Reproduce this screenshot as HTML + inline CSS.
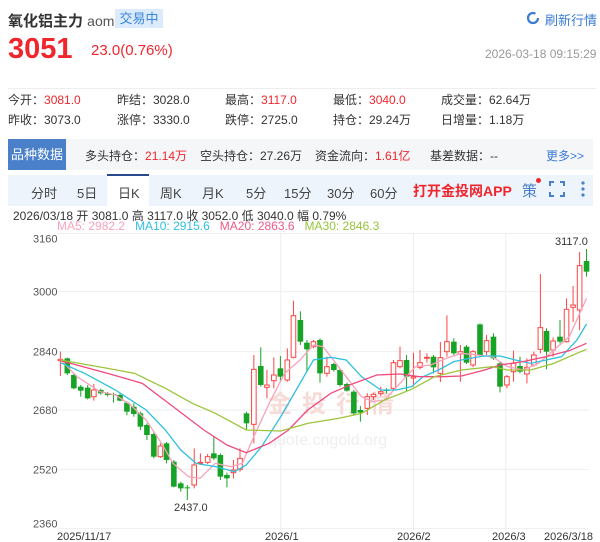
<!DOCTYPE html>
<html><head><meta charset="utf-8"><style>
*{margin:0;padding:0;box-sizing:border-box}
body{width:600px;height:542px;overflow:hidden;background:#fff;font-family:"Liberation Sans","Noto Sans CJK SC",sans-serif;color:#333;position:relative}
.a{position:absolute;white-space:nowrap}
.r{color:#f0262d}
.g{color:#555}
</style></head><body>
<div class="a" style="left:8px;top:10px;font-size:15px;font-weight:bold;color:#333">氧化铝主力 <span style="font-weight:normal;color:#555;font-size:14px">aom</span></div>
<div class="a" style="left:115px;top:9px;width:48px;height:19px;background:#dcebfb;color:#3a86d8;font-size:13px;text-align:center;line-height:19px">交易中</div>
<svg class="a" style="left:526px;top:11px" width="14" height="14" viewBox="0 0 14 14"><circle cx="7" cy="7" r="5" fill="none" stroke="#3a7bd5" stroke-width="2.2" stroke-dasharray="26 6"/></svg>
<div class="a" style="left:545px;top:10px;font-size:13px;color:#3a7bd5">刷新行情</div>
<div class="a r" style="left:8px;top:33px;font-size:29px;font-weight:bold">3051</div>
<div class="a r" style="left:91px;top:42px;font-size:15px">23.0(0.76%)</div>
<div class="a" style="left:485px;top:47px;font-size:12px;color:#999">2026-03-18 09:15:29</div>
<div class="a" style="left:8px;top:88px;width:588px;height:1px;background:#eee"></div>
<div class="a" style="left:8px;top:90px;font-size:12px;line-height:20px">今开：<span class="r">3081.0</span><br>昨收：3073.0</div>
<div class="a" style="left:117px;top:90px;font-size:12px;line-height:20px">昨结：3028.0<br>涨停：3330.0</div>
<div class="a" style="left:225px;top:90px;font-size:12px;line-height:20px">最高：<span class="r">3117.0</span><br>跌停：2725.0</div>
<div class="a" style="left:333px;top:90px;font-size:12px;line-height:20px">最低：<span class="r">3040.0</span><br>持仓：29.24万</div>
<div class="a" style="left:441px;top:90px;font-size:12px;line-height:20px">成交量：62.64万<br>日增量：1.18万</div>
<div class="a" style="left:8px;top:139px;width:585px;height:31px;background:#f5f6f8"></div>
<div class="a" style="left:8px;top:139px;width:58px;height:31px;background:#4a80c9;color:#fff;font-size:13px;line-height:31px;text-align:center">品种数据</div>
<div class="a" style="left:85px;top:147px;font-size:12px">多头持仓：<span class="r">21.14万</span></div>
<div class="a" style="left:200px;top:147px;font-size:12px">空头持仓：27.26万</div>
<div class="a" style="left:315px;top:147px;font-size:12px">资金流向：<span class="r">1.61亿</span></div>
<div class="a" style="left:430px;top:147px;font-size:12px">基差数据：--</div>
<div class="a" style="left:546px;top:147px;font-size:12px;color:#3a7bd5">更多&gt;&gt;</div>
<div class="a" style="left:8px;top:175px;width:585px;height:31px;background:#eef4fc"></div>
<div class="a" style="left:107px;top:174px;width:42px;height:32px;background:#fff;border-top:2px solid #274a8a"></div>
<div class="a" style="top:183px;left:0;font-size:13px;color:#444">
<span class="a" style="left:31px">分时</span><span class="a" style="left:77px">5日</span><span class="a" style="left:118px">日K</span><span class="a" style="left:160px">周K</span><span class="a" style="left:202px">月K</span><span class="a" style="left:246px">5分</span><span class="a" style="left:284px">15分</span><span class="a" style="left:327px">30分</span><span class="a" style="left:370px">60分</span></div>
<div class="a r" style="left:413px;top:181px;font-size:14px;font-weight:bold">打开金投网APP</div>
<div class="a" style="left:522px;top:180px;font-size:15px;color:#4a80c9">策</div>
<div class="a" style="left:536px;top:178px;width:5px;height:5px;border-radius:50%;background:#f0262d"></div>
<svg class="a" style="left:549px;top:181px" width="16" height="16"><path d="M1 5V1h4M11 1h4v4M15 11v4h-4M5 15H1v-4" fill="none" stroke="#4a80c9" stroke-width="2"/></svg>
<svg class="a" style="left:580px;top:180px" width="6" height="18"><circle cx="3" cy="3" r="1.6" fill="#4a80c9"/><circle cx="3" cy="9" r="1.6" fill="#4a80c9"/><circle cx="3" cy="15" r="1.6" fill="#4a80c9"/></svg>
<div class="a" style="left:13px;top:207px;font-size:12px;color:#333">2026/03/18 开 3081.0 高 3117.0 收 3052.0 低 3040.0 幅 0.79%</div>
<div class="a" style="left:57px;top:219px;font-size:12px"><span style="color:#f7a3bb">MA5: 2982.2</span>&nbsp;&nbsp; <span style="color:#2fc0df">MA10: 2915.6</span>&nbsp;&nbsp; <span style="color:#ef5a87">MA20: 2863.6</span>&nbsp;&nbsp; <span style="color:#96c53b">MA30: 2846.3</span></div>
<svg id="ch" class="a" style="left:0;top:0" width="600" height="542"></svg>
<script>
var s='';
var X=function(z){return z/2.6},Y=function(z){return 230+z/3};
[10,185,365,540,718,895].forEach(function(z){s+='<line x1="57" x2="589" y1="'+Y(z)+'" y2="'+Y(z)+'" stroke="#eee"/>'});
[730,1075,1315].forEach(function(z){s+='<line x1="'+X(z)+'" x2="'+X(z)+'" y1="233" y2="530" stroke="#eee"/>'});
var yl=[['3160',25],['3000',185],['2840',365],['2680',540],['2520',718],['2360',880]];
yl.forEach(function(a){s+='<text x="33" y="'+(Y(a[1])+4)+'" font-size="11" fill="#555">'+a[0]+'</text>'});
s+='<text x="268" y="412" font-size="24" fill="#f6dcd9" font-weight="bold" letter-spacing="10">金投行情</text>';
s+='<text x="268" y="445" font-size="16" fill="#eee">quote.cngold.org</text>';
var c=[[157,'r',388,392,365,438],[175,'g',385,430,383,435],[192,'g',435,475,430,478],[210,'g',470,482,465,500],[228,'g',473,505,465,508],[244,'r',480,500,462,512],[262,'g',480,490,476,494],[280,'g',490,495,486,500],[295,'g',492,495,488,518],[312,'g',495,512,488,514],[330,'g',518,545,514,556],[348,'g',530,552,520,560],[365,'g',550,590,545,600],[382,'g',585,615,580,630],[400,'g',612,680,608,685],[417,'r',648,680,640,684],[433,'g',640,690,636,700],[452,'g',695,770,690,772],[470,'g',760,775,755,785],[487,'g',772,775,765,810],[505,'r',705,765,655,775],[521,'r',697,700,670,705],[540,'r',680,697,672,702],[556,'g',670,685,620,690],[573,'g',675,740,670,750],[590,'g',735,745,728,772],[607,'r',720,728,690,745],[624,'r',685,718,655,725],[641,'g',550,580,545,598],[660,'r',418,583,375,640],[678,'g',408,465,352,470],[694,'r',465,472,420,505],[712,'r',435,452,382,475],[729,'g',415,440,378,455],[747,'r',390,450,355,455],[763,'r',257,382,212,385],[781,'g',270,335,244,345],[798,'g',338,358,330,425],[815,'r',335,350,330,355],[832,'g',330,430,325,458],[850,'r',410,430,380,440],[868,'g',402,420,398,425],[884,'g',420,465,415,470],[902,'g',462,482,458,485],[920,'g',485,550,480,556],[937,'g',540,548,528,575],[955,'r',500,535,490,555],[971,'r',493,500,488,510],[990,'r',485,490,470,498],[1005,'g',480,483,475,490],[1023,'r',398,475,390,480],[1040,'r',392,410,350,415],[1057,'g',390,440,375,485],[1075,'r',440,444,368,470],[1092,'r',398,412,360,418],[1110,'r',382,385,370,398],[1127,'g',380,412,375,430],[1145,'r',383,430,336,456],[1162,'r',335,365,256,380],[1180,'g',335,370,325,375],[1197,'r',365,372,345,455],[1213,'g',350,398,345,402],[1230,'r',365,405,360,412],[1248,'g',283,375,280,380],[1265,'r',332,365,315,375],[1283,'g',320,385,310,390],[1300,'g',400,470,395,487],[1318,'r',440,465,435,475],[1335,'r',400,425,362,455],[1352,'g',408,425,380,430],[1370,'r',412,432,385,460],[1388,'r',375,405,365,410],[1405,'r',293,358,132,370],[1421,'g',303,365,295,418],[1438,'r',333,360,322,380],[1456,'g',320,335,270,340],[1473,'r',238,335,205,338],[1490,'r',225,232,168,276],[1507,'r',107,240,66,300],[1525,'g',93,125,57,140]];
c.forEach(function(k){var x=X(k[0]),col=k[1]=='r'?'#f44':'#17a325';
s+='<line x1="'+x+'" x2="'+x+'" y1="'+Y(k[4])+'" y2="'+Y(k[5])+'" stroke="'+col+'"/>';
var h=Math.max(1,Y(k[3])-Y(k[2]));
s+=k[1]=='r'?'<rect x="'+(x-2.3)+'" y="'+Y(k[2])+'" width="4.6" height="'+h+'" fill="#fff" stroke="#f44"/>':'<rect x="'+(x-2.8)+'" y="'+Y(k[2])+'" width="5.6" height="'+h+'" fill="#17a325"/>';});
function pl(p,col){var a=[];for(var i=0;i<p.length;i+=2)a.push(X(p[i])+','+Y(p[i+1]));s+='<polyline points="'+a.join(' ')+'" fill="none" stroke="'+col+'" stroke-width="1.3"/>';}
pl([157,388,200,440,260,485,300,495,340,525,380,570,420,640,450,700,490,740,520,745,560,700,600,710,630,700,660,620,700,520,740,430,780,390,815,345,840,350,860,380,900,440,940,500,970,515,1000,510,1040,460,1080,410,1120,405,1160,385,1200,370,1240,375,1280,380,1320,410,1360,420,1400,400,1440,360,1480,320,1525,205],'#f7a3bb');
pl([157,398,220,430,300,480,380,540,430,600,470,660,510,700,560,710,610,725,640,705,680,650,730,560,770,480,815,390,860,382,900,390,940,440,990,480,1030,480,1070,470,1100,440,1140,420,1180,395,1220,385,1260,378,1300,378,1340,390,1380,400,1420,390,1460,380,1500,330,1525,282],'#2fc0df');
pl([157,392,280,430,370,460,450,530,530,600,590,645,640,668,700,640,750,600,800,540,860,490,920,460,980,435,1040,432,1090,440,1150,440,1200,438,1260,420,1300,405,1360,395,1420,380,1480,362,1525,340],'#ef4a7e');
pl([157,390,280,415,350,430,430,475,500,520,560,550,640,600,730,603,800,580,880,565,940,550,1000,510,1070,478,1130,440,1200,420,1280,410,1320,420,1380,420,1440,400,1500,370,1525,358],'#9cc53a');
s+='<text x="555" y="245" font-size="11" fill="#333">3117.0</text><text x="174" y="511" font-size="11" fill="#333">2437.0</text>';
[['2025/11/17',57],['2026/1',265],['2026/2',397],['2026/3',492],['2026/3/18',544]].forEach(function(a){s+='<text x="'+a[1]+'" y="540" font-size="11" fill="#333">'+a[0]+'</text>'});
document.getElementById('ch').innerHTML=s;
</script>
</body></html>
